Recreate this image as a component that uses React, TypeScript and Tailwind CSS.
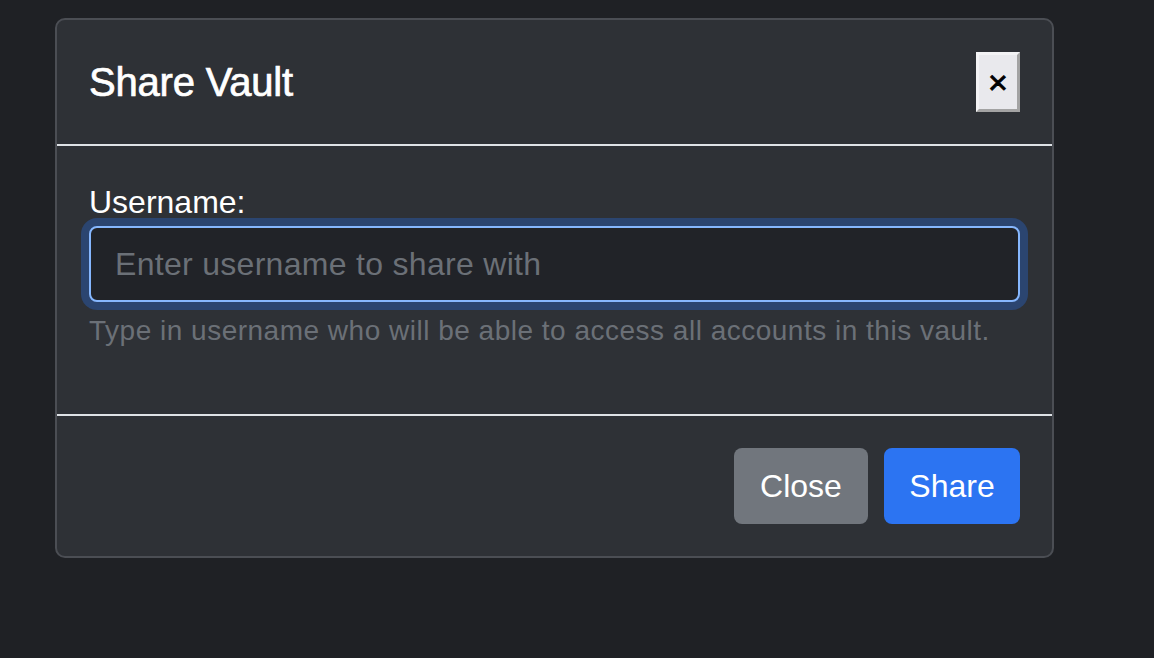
import React from "react";

export default function App() {
  return (
    <div className="w-[1154px] h-[658px] bg-[#1f2125] overflow-hidden pt-[18px] pl-[55px] font-['Liberation_Sans',Arial,sans-serif]">
      <div className="w-[999px] rounded-[10px] border-2 border-[#4b4e54] bg-[#2e3136] text-white">
        <div className="flex items-center justify-between pl-[32px] pr-[32px] py-[32px] border-b-2 border-[#dee2e6]">
          <h5 className="text-[40px] leading-[60px] font-normal m-0 tracking-[-0.2px] [-webkit-text-stroke:0.7px_white]">Share Vault</h5>
          <button
            type="button"
            className="w-[44px] h-[60px] flex items-center justify-center bg-[#e9e9ed] border-[3px] border-t-[#f3f3f5] border-l-[#f3f3f5] border-r-[#a3a3a3] border-b-[#a3a3a3] text-black text-[34px] leading-none [-webkit-text-stroke:0.8px_black]"
          >
            ×
          </button>
        </div>
        <div className="pl-[32px] pr-[32px] pt-[32px] pb-[62px]">
          <label className="block text-[32px] leading-[48px] text-white">Username:</label>
          <input
            type="text"
            placeholder="Enter username to share with"
            className="block w-full h-[76px] px-[24px] rounded-[8px] border-2 border-[#86b7fe] bg-[#212328] text-[32px] tracking-[0.3px] text-white placeholder:text-[#6b7077] outline-none shadow-[0_0_0_8px_#2b4570]"
          />
          <div className="mt-[8px] text-[28px] leading-[42px] tracking-[0.5px] text-[#6b7077]">
            Type in username who will be able to access all accounts in this vault.
          </div>
        </div>
        <div className="flex items-center justify-end gap-[16px] pl-[32px] pr-[32px] py-[32px] border-t-2 border-[#dee2e6]">
          <button
            type="button"
            className="h-[76px] w-[134px] rounded-[8px] bg-[#71767d] text-white text-[32px] leading-[48px]"
          >
            Close
          </button>
          <button
            type="button"
            className="h-[76px] w-[136px] rounded-[8px] bg-[#2c74f2] text-white text-[32px] leading-[48px]"
          >
            Share
          </button>
        </div>
      </div>
    </div>
  );
}
